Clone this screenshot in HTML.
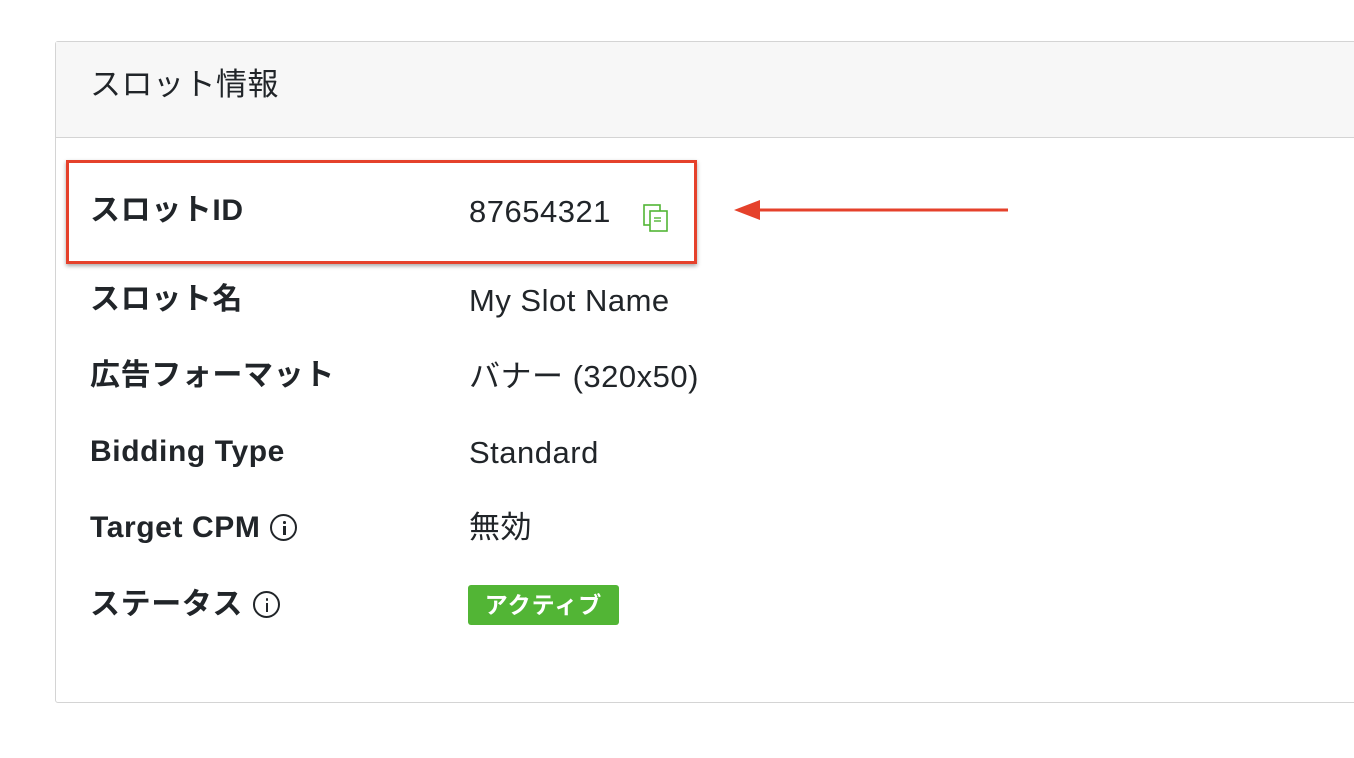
<!DOCTYPE html>
<html><head><meta charset="utf-8"><style>
body{margin:0;width:1354px;height:758px;background:#fff;position:relative;overflow:hidden;font-family:"Liberation Sans","Noto Sans CJK JP",sans-serif;color:#212529}
.card{position:absolute;left:55px;top:41px;width:1320px;height:662px;border:1.5px solid #d4d4d4;border-radius:3px;box-sizing:border-box}
.hd{position:absolute;left:0;top:0;right:0;height:95px;background:#f7f7f7;border-bottom:1.5px solid #d4d4d4}
.hd span{position:absolute;left:34px;top:17px;font-size:31px;letter-spacing:0.5px}
.row{position:absolute;left:90px;font-size:30px;line-height:36px;white-space:nowrap;letter-spacing:0.6px}
.lab{font-weight:bold}
.val{position:absolute;left:469px;font-size:31px;line-height:36px;white-space:nowrap;letter-spacing:0.5px}
.info{display:inline-block;width:27px;height:27px;border:2px solid #212529;border-radius:50%;box-sizing:border-box;vertical-align:-4px;margin-left:10px;position:relative}
.info:before{content:"";position:absolute;left:10.5px;top:5px;width:2.6px;height:2.6px;background:#212529;border-radius:50%}
.info:after{content:"";position:absolute;left:10.5px;top:10px;width:2.6px;height:9px;background:#212529}
.box{position:absolute;left:66px;top:160px;width:631px;height:104px;border:3px solid #e5412b;box-sizing:border-box;box-shadow:0 2px 4px rgba(0,0,0,.35)}
.badge{position:absolute;left:468px;top:585px;width:151px;height:40px;background:#52b535;border-radius:3px;color:#fff;font-weight:bold;font-size:23px;letter-spacing:1px;text-align:center;line-height:40px}
</style></head><body>
<div class="card"><div class="hd"><span>スロット情報</span></div></div>
<div class="box"></div>
<div class="row lab" style="top:193px">スロットID</div><div class="val" style="top:194px">87654321</div>
<svg style="position:absolute;left:642px;top:203px" width="28" height="30" viewBox="0 0 28 30"><rect x="2" y="2" width="16" height="20" fill="none" stroke="#52b535" stroke-width="1.6"/><rect x="8" y="8" width="17" height="20" fill="#fff" stroke="#52b535" stroke-width="1.6"/><line x1="12" y1="15" x2="19" y2="15" stroke="#52b535" stroke-width="1.4"/><line x1="12" y1="18" x2="19" y2="18" stroke="#52b535" stroke-width="1.4"/></svg>
<svg style="position:absolute;left:730px;top:198px" width="285" height="26"><line x1="20" y1="12" x2="278" y2="12" stroke="#e5412b" stroke-width="3"/><polygon points="4,12 30,2 30,22" fill="#e5412b"/></svg>
<div class="row lab" style="top:282px">スロット名</div><div class="val" style="top:283px">My Slot Name</div>
<div class="row lab" style="top:358px">広告フォーマット</div><div class="val" style="top:359px">バナー (320x50)</div>
<div class="row lab" style="top:434px">Bidding Type</div><div class="val" style="top:435px">Standard</div>
<div class="row lab" style="top:510px">Target CPM<span class="info"></span></div><div class="val" style="top:510px">無効</div>
<div class="row lab" style="top:587px">ステータス<span class="info"></span></div>
<div class="badge">アクティブ</div>
</body></html>
